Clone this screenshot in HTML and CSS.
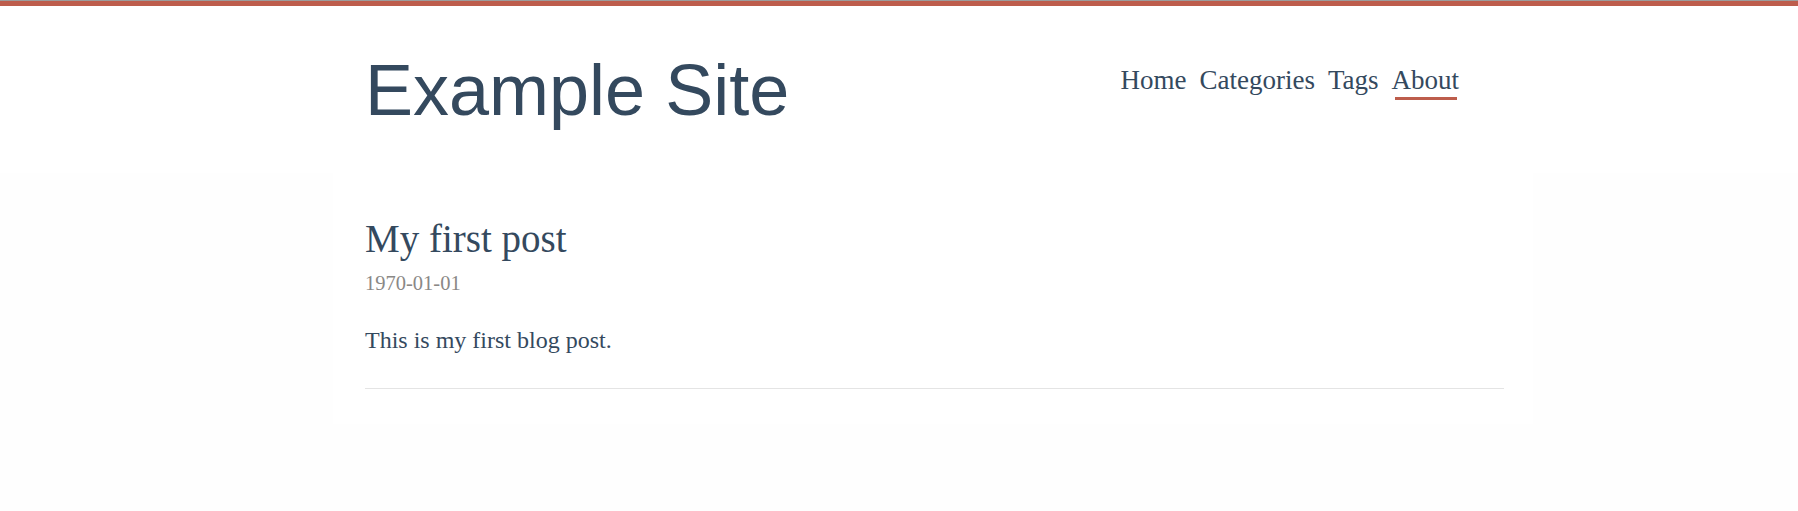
FILE: index.html
```html
<!DOCTYPE html>
<html lang="en">
<head>
<meta charset="utf-8">
<title>Example Site</title>
<link rel="stylesheet" href="styles.css">
</head>
<body>
<div class="topbar"></div>
<header class="site-header">
  <div class="wrap header-inner">
    <a class="site-title" href="#">Example Site</a>
    <nav class="site-nav">
      <a href="#">Home</a>
      <a href="#">Categories</a>
      <a href="#">Tags</a>
      <a href="#" class="active">About</a>
    </nav>
  </div>
</header>
<main class="wrap post">
  <h1 class="post-title">My first post</h1>
  <div class="post-date">1970-01-01</div>
  <p class="post-body">This is my first blog post.</p>
  <hr class="post-rule">
</main>
</body>
</html>
```

FILE: styles.css
```css
html, body {
  margin: 0;
  padding: 0;
}
body {
  background: #fefefe;
  color: #34495e;
  font-family: "Liberation Serif", "Times New Roman", serif;
  min-height: 511px;
}
a {
  color: inherit;
  text-decoration: none;
}
.topbar {
  height: 5px;
  border-top: 1px solid #9c9c9c;
  background: #bd5d4c;
}
.site-header {
  background: #ffffff;
}
.wrap {
  width: 1200px;
  box-sizing: border-box;
  margin-left: 333px;
  padding-left: 32px;
  padding-right: 29px;
}
.header-inner {
  display: flex;
  justify-content: space-between;
  align-items: flex-start;
  padding-top: 43px;
  padding-bottom: 42px;
}
.site-title {
  font-family: "Liberation Sans", Arial, sans-serif;
  font-size: 72px;
  line-height: 82px;
  color: #34495e;
}
.site-nav {
  display: flex;
  gap: 13px;
  margin-top: 16px;
  margin-right: 45px;
}
.site-nav a {
  position: relative;
  font-size: 27px;
  line-height: 30px;
}
.site-nav a.active::after {
  content: "";
  position: absolute;
  left: 3px;
  right: 2px;
  top: 32px;
  height: 3px;
  background: #bd5d4c;
}
.post {
  background: #ffffff;
  padding-top: 42px;
  padding-bottom: 35px;
}
.post-title {
  margin: 0;
  font-weight: normal;
  font-size: 39px;
  line-height: 47px;
}
.post-date {
  margin-top: 9px;
  font-size: 20.5px;
  line-height: 25px;
  color: #8a8886;
}
.post-body {
  margin: 29px 0 0;
  font-size: 24px;
  line-height: 30px;
}
.post-rule {
  margin: 33px 0 0;
  border: 0;
  height: 1px;
  background: #e4e4e4;
}
```
